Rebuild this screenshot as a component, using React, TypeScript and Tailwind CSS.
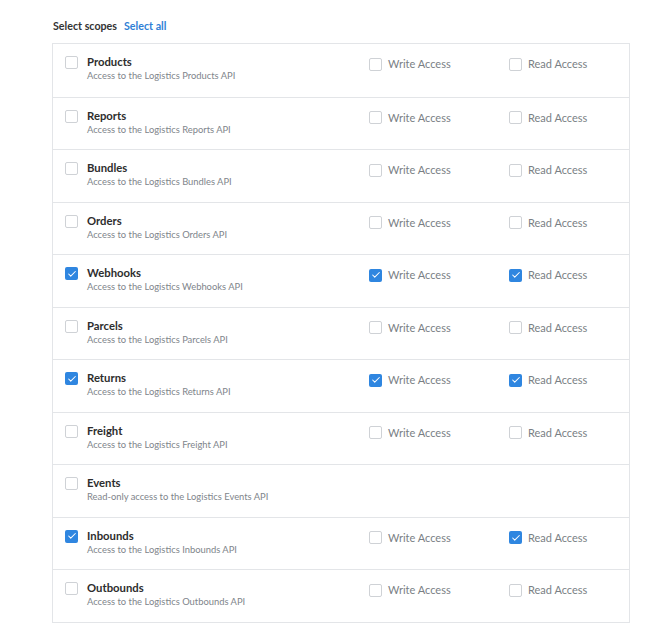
import { Check } from "lucide-react";

interface Scope {
  name: string;
  description: string;
  checked: boolean;
  write?: boolean;
  read?: boolean;
  readOnly?: boolean;
}

const scopes: Scope[] = [
  { name: "Products", description: "Access to the Logistics Products API", checked: false },
  { name: "Reports", description: "Access to the Logistics Reports API", checked: false },
  { name: "Bundles", description: "Access to the Logistics Bundles API", checked: false },
  { name: "Orders", description: "Access to the Logistics Orders API", checked: false },
  { name: "Webhooks", description: "Access to the Logistics Webhooks API", checked: true, write: true, read: true },
  { name: "Parcels", description: "Access to the Logistics Parcels API", checked: false },
  { name: "Returns", description: "Access to the Logistics Returns API", checked: true, write: true, read: true },
  { name: "Freight", description: "Access to the Logistics Freight API", checked: false },
  { name: "Events", description: "Read-only access to the Logistics Events API", checked: false, readOnly: true },
  { name: "Inbounds", description: "Access to the Logistics Inbounds API", checked: true, read: true },
  { name: "Outbounds", description: "Access to the Logistics Outbounds API", checked: false },
];

function Box({ checked }: { checked?: boolean }) {
  return checked ? (
    <span className="flex h-[13px] w-[13px] shrink-0 items-center justify-center rounded-[2px] bg-[#2f86e0]">
      <Check className="h-[10px] w-[10px] text-white" strokeWidth={2.5} />
    </span>
  ) : (
    <span className="h-[13px] w-[13px] shrink-0 rounded-[2px] border border-[#cfd2d6] bg-white" />
  );
}

export default function App() {
  return (
    <div className="min-h-screen bg-white pl-[52px] pt-[18px] font-['Lato',sans-serif]">
      <div className="flex items-baseline gap-[7px] pl-[1px] text-[10.7px] font-bold">
        <span className="text-[#333]">Select scopes</span>
        <span className="text-[#2f7fd6]">Select all</span>
      </div>

      <div className="mt-[9px] w-[578px] border border-[#e3e5e8]">
        {scopes.map((scope, i) => (
          <div
            key={scope.name}
            className={`flex h-[52.5px] items-start pl-[12px] pt-[12px] ${
              i > 0 ? "border-t border-[#e3e5e8]" : ""
            }`}
          >
            <div className="flex w-[304px] gap-[9px]">
              <Box checked={scope.checked} />
              <div className="-mt-[2px]">
                <div className="text-[11.3px] font-bold leading-[15px] text-[#2d2d2d]">
                  {scope.name}
                </div>
                <div className="text-[9.4px] leading-[14px] text-[#80858b]">
                  {scope.description}
                </div>
              </div>
            </div>
            {!scope.readOnly && (
              <>
                <div className="flex w-[140px] items-center gap-[6px]">
                  <Box checked={scope.write} />
                  <span className="text-[11px] text-[#7a7f85]">Write Access</span>
                </div>
                <div className="flex items-center gap-[6px]">
                  <Box checked={scope.read} />
                  <span className="text-[11px] text-[#7a7f85]">Read Access</span>
                </div>
              </>
            )}
          </div>
        ))}
      </div>
    </div>
  );
}
